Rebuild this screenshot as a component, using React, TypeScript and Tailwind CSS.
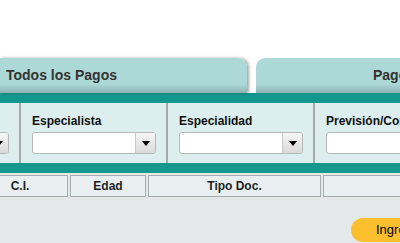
const columns = ['', 'Especialista', 'Especialidad', 'Previsión/Convenio'];

function FakeSelect() {
  return (
    <div className="flex h-[22px] w-[124px] shrink-0 overflow-hidden rounded-[3px] border border-[#b4b8b8] bg-white">
      <div className="flex-1" />
      <div className="flex w-[20px] items-center justify-center border-l border-[#c8c8c8] bg-gradient-to-b from-[#f6f6f6] to-[#dadada]">
        <span className="h-0 w-0 border-x-[4px] border-t-[5px] border-x-transparent border-t-black" />
      </div>
    </div>
  );
}

function FilterColumn({ label, last }: { label: string; last?: boolean }) {
  return (
    <div className="flex shrink-0">
      <div className="flex w-[145px] shrink-0 flex-col pl-[11px] pt-[11px]">
        <span className="h-[15px] whitespace-nowrap text-[12px] font-bold leading-[15px] text-[#111]">{label}</span>
        {last ? (
          <div className="mt-[3px] h-[22px] w-[124px] rounded-[3px] border border-[#b4b8b8] bg-white" />
        ) : (
          <div className="mt-[3px]">
            <FakeSelect />
          </div>
        )}
      </div>
      <div className="w-[2px] shrink-0 bg-[#a3abab]" />
    </div>
  );
}

const headers = [
  { t: 'C.I.', w: 'w-[96px] -ml-[28px]' },
  { t: 'Edad', w: 'w-[76px]' },
  { t: 'Tipo Doc.', w: 'w-[173px]' },
  { t: '', w: 'w-[120px]' },
];

export default function App() {
  return (
    <div className="h-[243px] w-[400px] overflow-hidden bg-[#e5e8e9] font-['Liberation_Sans',Arial,sans-serif]">
      {/* Tabs */}
      <div className="flex h-[93px] items-end gap-[9px] bg-white">
        <div className="flex h-[35px] w-[247px] shrink-0 items-center rounded-tr-[9px] bg-gradient-to-b from-[#acd8d8] from-75% to-[#8db3b3] pl-[6px] shadow-[2px_0_3px_rgba(0,0,0,0.35)]">
          <span className="text-[14px] font-bold text-[#333]">Todos los Pagos</span>
        </div>
        <div className="flex h-[35px] w-[300px] shrink-0 items-center rounded-tl-[9px] bg-gradient-to-b from-[#acd8d8] from-75% to-[#8db3b3] pl-[117px]">
          <span className="whitespace-nowrap text-[14px] font-bold text-[#333]">Pagos Pendientes</span>
        </div>
      </div>

      <div className="h-[10px] bg-[#13978f]" />

      {/* Filters */}
      <div className="flex h-[60px] bg-[#dcefee]">
        <div className="-ml-[126px] flex">
          {columns.map((c, i) => (
            <FilterColumn key={i} label={c} last={i === 3} />
          ))}
        </div>
      </div>

      <div className="h-[10px] bg-[#13978f]" />

      {/* Table header */}
      <div className="mt-[2px] flex gap-[2px]">
        {headers.map((c, i) => (
          <div
            key={i}
            className={`${c.w} flex h-[22px] shrink-0 items-center justify-center border border-[#a3adad] bg-[#e9eff0] text-[12px] font-bold text-[#1b1f24]`}
          >
            {c.t}
          </div>
        ))}
      </div>

      <div className="flex pl-[351px] pt-[21px]">
        <button className="flex h-[24px] w-[120px] shrink-0 items-center whitespace-nowrap rounded-full bg-[#fbbf2e] pl-[25px] text-[13px] text-black">
          Ingresar Pago
        </button>
      </div>
    </div>
  );
}
